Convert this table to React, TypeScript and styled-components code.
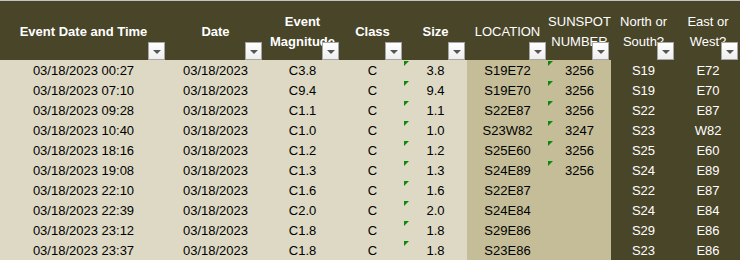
import React from "react";
import styled, { createGlobalStyle } from "styled-components";

const GlobalStyle = createGlobalStyle`
  html, body { margin: 0; padding: 0; background: #ffffff; }
  body { font-family: "Liberation Sans", Arial, sans-serif; }
`;

const COLS = "167px 97px 77px 63px 63px 81px 63px 65px 64px";

const Sheet = styled.div`
  width: 740px;
  height: 261px;
  overflow: hidden;
  border-top: 1px solid #c3c3c3;
  box-sizing: border-box;
  display: grid;
  grid-template-columns: ${COLS};
  grid-auto-rows: 20px;
  grid-template-rows: 59px;
  font-family: "Liberation Sans", Arial, sans-serif;
  font-size: 13px;
`;

const HeaderCell = styled.div<{ $bold?: boolean }>`
  position: relative;
  background: #494529;
  color: #ffffff;
  font-weight: ${(p) => (p.$bold ? 700 : 400)};
  display: flex;
  align-items: center;
  justify-content: center;
  text-align: center;
  line-height: 20px;
  padding-top: 3px;
  box-sizing: border-box;
  white-space: nowrap;
`;

const FilterButton = styled.div`
  position: absolute;
  right: 2px;
  bottom: 0;
  width: 17px;
  height: 18px;
  box-sizing: border-box;
  border: 1px solid #a6a6a6;
  background: linear-gradient(#ffffff, #eeeeee);
  display: flex;
  align-items: center;
  justify-content: center;
  &::after {
    content: "";
    display: block;
    margin-top: 2px;
    width: 0;
    height: 0;
    border-left: 4px solid transparent;
    border-right: 4px solid transparent;
    border-top: 4px solid #555555;
  }
`;

type Tone = "light" | "mid" | "dark";

const toneBg: Record<Tone, string> = {
  light: "#ddd9c4",
  mid: "#c4bd97",
  dark: "#494529",
};

const Cell = styled.div<{ $tone: Tone }>`
  position: relative;
  background: ${(p) => toneBg[p.$tone]};
  color: ${(p) => (p.$tone === "dark" ? "#ffffff" : "#000000")};
  text-align: center;
  line-height: 20px;
  padding-top: 1px;
  box-sizing: border-box;
  white-space: nowrap;
  overflow: hidden;
`;

const ErrorMark = styled.span`
  position: absolute;
  left: 0;
  top: 1px;
  width: 5px;
  height: 5px;
  background: #0a8a0a;
  clip-path: polygon(0 0, 100% 0, 0 100%);
`;

const headers: { lines: string[]; bold: boolean }[] = [
  { lines: ["Event Date and Time"], bold: true },
  { lines: ["Date"], bold: true },
  { lines: ["Event", "Magnitude"], bold: true },
  { lines: ["Class"], bold: true },
  { lines: ["Size"], bold: true },
  { lines: ["LOCATION"], bold: false },
  { lines: ["SUNSPOT", "NUMBER"], bold: false },
  { lines: ["North or", "South?"], bold: false },
  { lines: ["East or", "West?"], bold: false },
];

const tones: Tone[] = ["light", "light", "light", "light", "light", "mid", "mid", "dark", "dark"];

const rows: string[][] = [
  ["03/18/2023 00:27", "03/18/2023", "C3.8", "C", "3.8", "S19E72", "3256", "S19", "E72"],
  ["03/18/2023 07:10", "03/18/2023", "C9.4", "C", "9.4", "S19E70", "3256", "S19", "E70"],
  ["03/18/2023 09:28", "03/18/2023", "C1.1", "C", "1.1", "S22E87", "3256", "S22", "E87"],
  ["03/18/2023 10:40", "03/18/2023", "C1.0", "C", "1.0", "S23W82", "3247", "S23", "W82"],
  ["03/18/2023 18:16", "03/18/2023", "C1.2", "C", "1.2", "S25E60", "3256", "S25", "E60"],
  ["03/18/2023 19:08", "03/18/2023", "C1.3", "C", "1.3", "S24E89", "3256", "S24", "E89"],
  ["03/18/2023 22:10", "03/18/2023", "C1.6", "C", "1.6", "S22E87", "", "S22", "E87"],
  ["03/18/2023 22:39", "03/18/2023", "C2.0", "C", "2.0", "S24E84", "", "S24", "E84"],
  ["03/18/2023 23:12", "03/18/2023", "C1.8", "C", "1.8", "S29E86", "", "S29", "E86"],
  ["03/18/2023 23:37", "03/18/2023", "C1.8", "C", "1.8", "S23E86", "", "S23", "E86"],
];

export default function App() {
  return (
    <>
      <GlobalStyle />
      <Sheet>
        {headers.map((h, i) => (
          <HeaderCell key={`h${i}`} $bold={h.bold}>
            <div>
              {h.lines.map((l, j) => (
                <div key={j}>{l}</div>
              ))}
            </div>
            <FilterButton />
          </HeaderCell>
        ))}
        {rows.map((r, ri) =>
          r.map((v, ci) => (
            <Cell key={`${ri}-${ci}`} $tone={tones[ci]}>
              {(ci === 4 || (ci === 6 && v !== "")) && <ErrorMark />}
              {v}
            </Cell>
          ))
        )}
      </Sheet>
    </>
  );
}
